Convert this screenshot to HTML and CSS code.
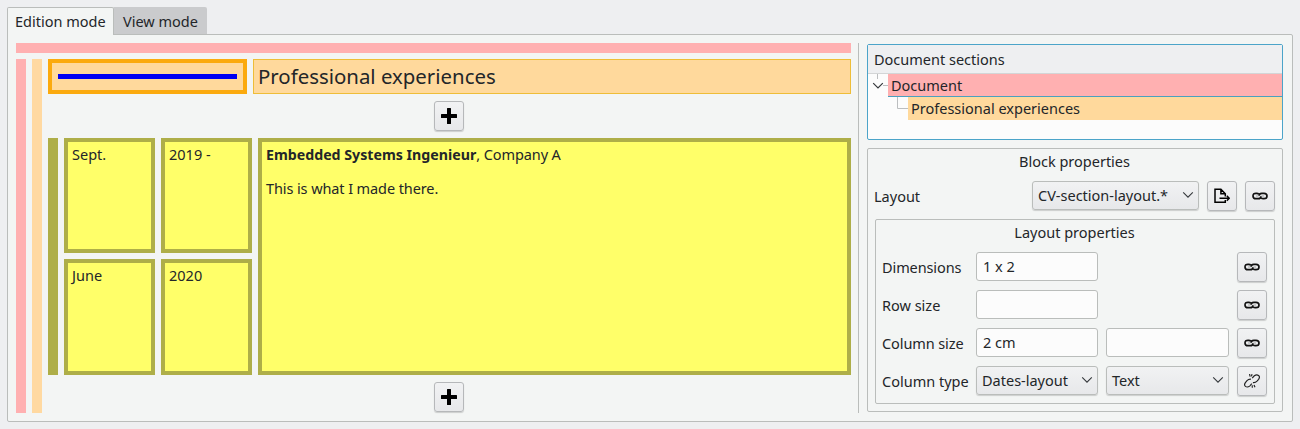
FILE: index.html
```html
<!DOCTYPE html>
<html lang="en">
<head>
<meta charset="utf-8">
<title>Document editor</title>
<link rel="stylesheet" href="styles.css">
</head>
<body>
<svg class="defs" aria-hidden="true">
  <symbol id="plus" viewBox="0 0 16 16"><path d="M6.6 0h2.800q.6 0 .6.6V6h5.400q.6 0 .6.6v2.800q0 .6-.6.6H10v5.400q0 .6-.6.6H6.600q-.6 0-.6-.6V10H.6q-.6 0-.6-.6V6.600Q0 6 .6 6H6V.6Q6 0 6.600 0z"/></symbol>
  <symbol id="chevron" viewBox="0 0 12 8"><path d="M1.200 1.300 6 6.100l4.800-4.800" fill="none" stroke="#35393c" stroke-width="1.100"/></symbol>
  <symbol id="link" viewBox="0 0 16 8"><g fill="none" stroke="#111" stroke-width="1.700"><path d="M7 2.200Q6.200 1.300 4.600 1.300H4Q1 1.300 1 4t3 2.700h2.200Q8.900 6.700 8.900 4.200"/><path d="M9 5.800Q9.800 6.700 11.400 6.700H12Q15 6.700 15 4t-3-2.700H9.800Q7.100 1.300 7.100 3.800"/></g><path d="M4 4h2.400M9.600 4H12" stroke="#777" stroke-width=".6"/></symbol>
  <symbol id="export" viewBox="0 0 16 16"><path d="M11.300 8.400V5.700L6.900 1.200H1v13h10.300V12M6.900 1.200v4.500h4.400" fill="none" stroke="#000" stroke-width="1.500"/><path d="M5.500 10.200h10M12.800 7.700l2.500 2.500-2.500 2.500" fill="none" stroke="#000" stroke-width="1.400"/></symbol>
  <symbol id="unlink" viewBox="0 0 16 14"><g fill="none" stroke="#222" stroke-width="1.150"><path d="M7 5.200Q4.700 4.900 3 6.700L1.400 8.600Q-.3 11 1.500 12.400t4.200-.3L7.800 9.700"/><path d="M8.900 8.600Q11.300 9 13 7.200l1.600-1.900q1.700-2.400-.1-3.800t-4.200.3L8.200 4.200"/><path d="M5.500 0l.7 2.700M8 .2l-.5 2.100M8.200 11.300l.1 2.500M10 10.900l1 2.300"/></g></symbol>
</svg>

<main class="window">
  <nav class="tabs">
    <div class="tab tab-active">Edition mode</div>
    <div class="tab">View mode</div>
  </nav>
  <div class="pane">
    <section class="editor">
      <div class="bar bar-document"></div>
      <div class="editor-body">
        <div class="rail bar-document"></div>
        <div class="rail rail-section"></div>
        <div class="section">
          <header class="section-head">
            <div class="rule-block"><div class="rule"></div></div>
            <h1 class="title">Professional experiences</h1>
          </header>
          <button class="btn add"><svg class="i-plus"><use href="#plus"/></svg></button>
          <div class="entry">
            <div class="rail rail-entry"></div>
            <div class="dates">
              <div class="cell">Sept.</div>
              <div class="cell">2019 -</div>
              <div class="cell">June</div>
              <div class="cell">2020</div>
            </div>
            <div class="cell body-cell"><p><b>Embedded Systems Ingenieur</b>, Company A</p><p>This is what I made there.</p></div>
          </div>
          <button class="btn add"><svg class="i-plus"><use href="#plus"/></svg></button>
        </div>
      </div>
    </section>
    <div class="splitter"></div>
    <aside class="side">
      <div class="tree">
        <div class="tree-head">Document sections</div>
        <div class="tree-row">
          <svg class="branch-root" viewBox="0 0 20 22"><path d="M9.500 0v5M15 11.500h5" stroke="#bcbec0" fill="none"/><path d="M5.200 9.200 10 14l4.800-4.800" fill="none" stroke="#35393c" stroke-width="1.200"/></svg>
          <div class="node node-document">Document</div>
        </div>
        <div class="tree-row">
          <svg class="branch-child" viewBox="0 0 40 23"><path d="M29.500 0v11.500H40" stroke="#bcbec0" fill="none"/></svg>
          <div class="node node-section">Professional experiences</div>
        </div>
      </div>
      <div class="group block-group">
        <div class="group-title">Block properties</div>
        <div class="layout-row">
          <label class="label grow">Layout</label>
          <div class="combo combo-layout">CV-section-layout.*<svg class="i-chevron"><use href="#chevron"/></svg></div>
          <button class="btn"><svg class="i-export"><use href="#export"/></svg></button>
          <button class="btn"><svg class="i-link"><use href="#link"/></svg></button>
        </div>
        <div class="group layout-group">
          <div class="group-title">Layout properties</div>
          <div class="props">
            <label class="label tight">Dimensions</label><div class="field">1 x 2</div><span></span><button class="btn"><svg class="i-link"><use href="#link"/></svg></button>
            <label class="label">Row size</label><div class="field"></div><span></span><button class="btn"><svg class="i-link"><use href="#link"/></svg></button>
            <label class="label tight">Column size</label><div class="field">2 cm</div><div class="field"></div><button class="btn"><svg class="i-link"><use href="#link"/></svg></button>
            <label class="label">Column type</label><div class="combo">Dates-layout<svg class="i-chevron"><use href="#chevron"/></svg></div><div class="combo">Text<svg class="i-chevron"><use href="#chevron"/></svg></div><button class="btn"><svg class="i-unlink"><use href="#unlink"/></svg></button>
          </div>
        </div>
      </div>
    </aside>
  </div>
</main>
</body>
</html>
```
FILE: styles.css
```css
* { box-sizing: border-box; }
body { margin: 0; background: #eeeff1; color: #232629; font: 14.5px/20px "Noto Sans", "Open Sans", sans-serif; white-space: nowrap; overflow: hidden; }
p, h1 { margin: 0; font-weight: 400; }
.defs { display: block; width: 0; height: 0; }
.window { display: flex; flex-direction: column; width: 1300px; height: 429px; padding: 7px; }

.tabs { display: flex; height: 27px; }
.tab { height: 27px; padding: 4px 0 0 9px; width: 93px; background: #cacbcd; border-radius: 0 2px 0 0; }
.tab-active { width: 107px; height: 28px; padding: 3px 0 0 7px; background: #f3f5f4; border: 1px solid #babdbb; border-bottom: 0; border-radius: 2px 2px 0 0; z-index: 1; }
.pane { flex: 1; display: flex; border: 1px solid #babdbb; border-radius: 0 2px 2px 2px; background: #f3f5f4; padding: 8px 9px 8px 8px; }

.editor { width: 835px; display: flex; flex-direction: column; gap: 6px; }
.bar { height: 10px; }
.bar-document { background: #ffb0b1; }
.editor-body { flex: 1; display: flex; gap: 6px; }
.rail { width: 10px; flex: none; }
.rail-section { background: #ffd9a1; }
.rail-entry { background: #aeae48; }
.section { flex: 1; display: flex; flex-direction: column; }
.section-head { display: flex; gap: 6px; height: 35px; margin-bottom: 7px; }
.rule-block { width: 199px; border: 4px solid #fbaa0e; background: #ffd99c; padding: 11px 6px; }
.rule { height: 5px; background: #0000f2; }
.title { flex: 1; border: 1px solid #eebd38; background: #ffd99c; padding-left: 4px; font-size: 20.4px; line-height: 33px; }
.entry { display: flex; gap: 6px; height: 237px; margin: 7px 0; }
.dates { display: grid; grid-template-columns: 91px 91px; grid-template-rows: 115px 116px; gap: 6px; }
.cell { border: 4px solid #aeae48; background: #ffff69; padding: 2px 4px; }
.body-cell { flex: 1; letter-spacing: -0.1px; }
.body-cell p + p { margin-top: 13px; }
.body-cell b { font-size: 14.2px; letter-spacing: 0; }

.btn { width: 30px; height: 30px; padding: 0; display: flex; align-items: center; justify-content: center; border: 1px solid #b6b8ba; border-radius: 3px; background: linear-gradient(#f1f2f3, #e7e8ea); box-shadow: 0 1px 1px rgba(0, 0, 0, .16); }
.add { margin: 0 auto 0 386px; }
.i-plus { width: 16px; height: 16px; }
.i-chevron { width: 12px; height: 8px; margin-right: -1px; }
.i-link { width: 16px; height: 8px; }
.i-export { width: 16px; height: 16px; }
.i-unlink { width: 16px; height: 14px; }

.splitter { width: 1px; margin: 0 8px 0 7px; background: #babdbb; }
.side { flex: 1; padding-top: 1px; display: flex; flex-direction: column; gap: 8px; }
.tree { height: 96px; border: 1px solid #4ba4c9; border-radius: 2px; background: #fcfcfc; }
.tree-head { height: 29px; padding: 4px 6px 0; background: #eeeff1; border-bottom: 1px solid #d3d5d6; }
.tree-row { display: flex; height: 23px; }
.branch-root { width: 20px; height: 22px; }
.branch-child { width: 40px; height: 23px; }
.node { flex: 1; padding-left: 3px; line-height: 22px; }
.node-document { background: #ffb0b1; border-bottom: 1px solid #4ba0bf; }
.node-section { background: #ffd99c; }

.group { border: 1px solid #babdbb; border-radius: 2px; }
.group-title { text-align: center; line-height: 20px; }
.block-group { flex: 1; margin-bottom: 1px; padding: 2px 7px 7px; display: flex; flex-direction: column; }
.block-group > .group-title { margin: 0 1px 10px 0; }
.layout-row { display: flex; gap: 8px; height: 30px; margin: 0 0 8px -1px; }
.grow { flex: 1; }
.label { line-height: 31px; }
.tight { letter-spacing: -.1px; }
.layout-group { flex: 1; padding: 2px 7px 0 6px; }
.layout-group > .group-title { margin-bottom: 10px; }
.props { display: grid; grid-template-columns: 86px 122px 123px 30px; column-gap: 8px; row-gap: 8px; grid-auto-rows: 30px; }
.field, .combo { height: 29px; border: 1px solid #babdbb; border-radius: 3px; line-height: 26px; }
.field { background: #fcfcfc; padding-left: 6px; }
.combo { display: flex; align-items: center; justify-content: space-between; padding: 0 5px 1px; background: linear-gradient(#f1f2f3, #e7e8ea); box-shadow: 0 1px 1px rgba(0, 0, 0, .16); }
.combo-layout { width: 167px; }
```
